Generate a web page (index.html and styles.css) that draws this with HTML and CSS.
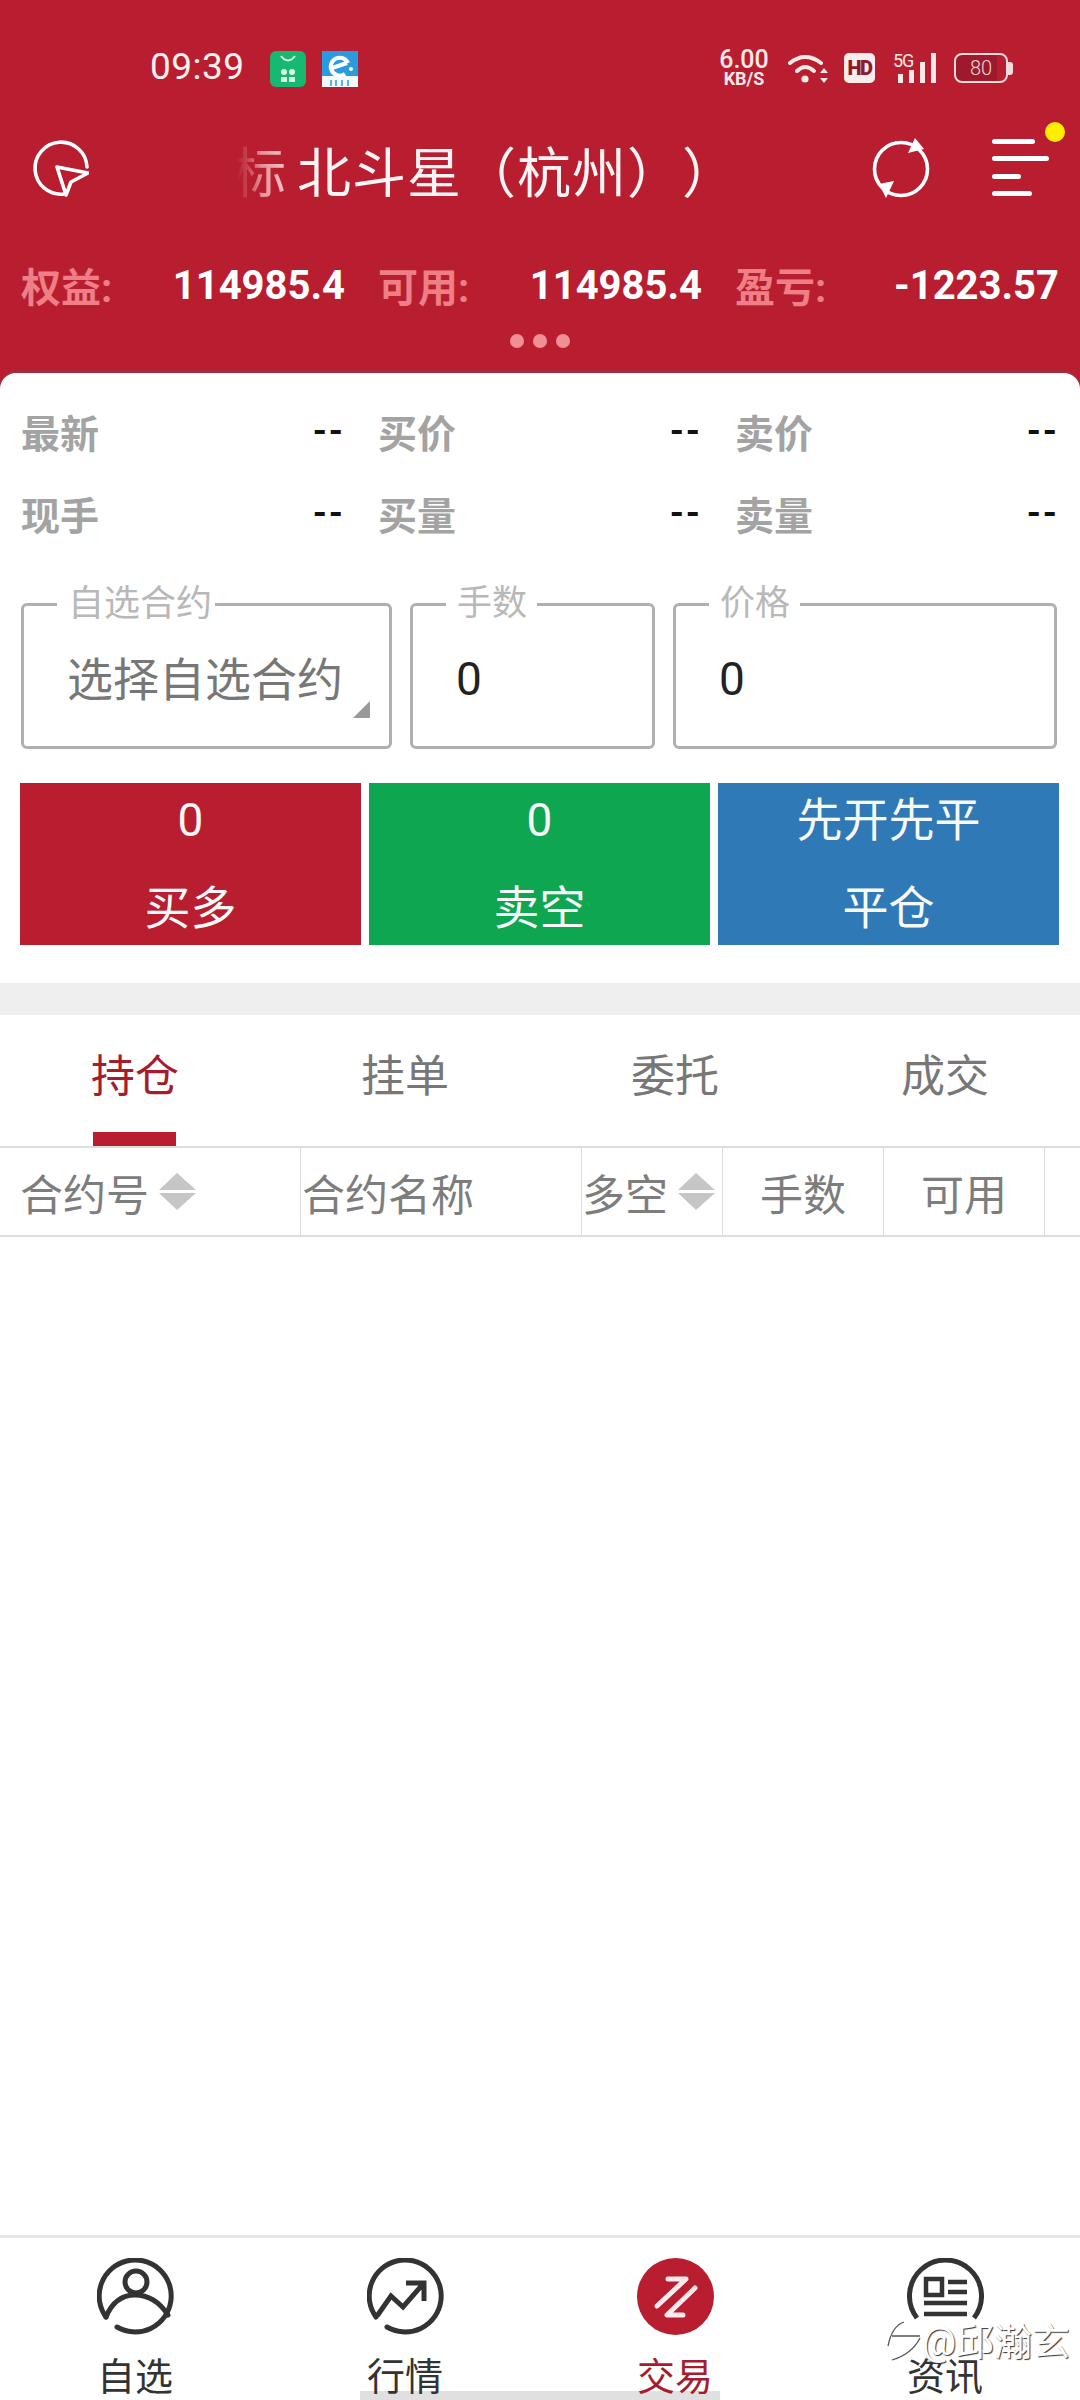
FILE: index.html
```html
<!DOCTYPE html>
<html lang="en">
<head>
    <meta charset="UTF-8">
    <meta name="viewport" content="width=device-width, initial-scale=1.0">
    <title>交易</title>
    <link rel="stylesheet" href="styles.css">
</head>
<body>
<div class="app">
    <div class="top">
        <div class="status">
            <span class="time">09:39</span>
            <svg class="app-icon" viewBox="0 0 36 36"><rect width="36" height="36" rx="6" fill="#16b96f"/><path d="M11 5q7 9 14 0" fill="none" stroke="#d8f5e6" stroke-width="2"/><g fill="#d8f5e6"><circle cx="14" cy="21" r="3"/><circle cx="22" cy="21" r="3"/><rect x="11" y="26" width="6" height="5"/><rect x="19" y="26" width="6" height="5"/></g></svg>
            <svg class="app-icon" viewBox="0 0 36 36"><rect width="36" height="36" fill="#2a9be0"/><rect y="25" width="36" height="11" fill="#f2f9fd"/><path d="M26 12a9 9 0 1 0-3 11M10 17l15-5" fill="none" stroke="#fff" stroke-width="4"/><circle cx="29" cy="18" r="2" fill="#fff"/><path d="M9 29v6M14 29v6M20 29v6M26 29v6" stroke="#2a9be0" stroke-width="1.5"/></svg>
            <span class="status-gap"></span>
            <span class="speed"><b>6.00</b><i>KB/S</i></span>
            <svg class="wifi" viewBox="0 0 41 28"><g fill="none" stroke="#f9e8e8" stroke-width="4" stroke-linecap="round"><path d="M2 8Q17-4 33 8"/><path d="M9 16Q17 8 26 16"/></g><circle cx="17" cy="24" r="3.6" fill="#f9e8e8"/><path d="M36 13l4 5h-8zM36 28l4-5h-8z" fill="#f9e8e8"/></svg>
            <span class="hd">HD</span>
            <span class="signal"><em>5G</em><i class="b1"></i><i class="b2"></i><i class="b3"></i><i class="b4"></i></span>
            <span class="battery"><span class="battery-body">80</span><i></i></span>
        </div>

        <div class="title-row">
            <svg class="ico-loc" viewBox="0 0 57 59"><path d="M32 55A26 26 0 1 1 55 28" fill="none" stroke="#fff" stroke-width="3.6" stroke-linecap="round"/><path d="M25 28L56 34L39 43L34 56Z" fill="#b81e2f" stroke="#fff" stroke-width="3.6" stroke-linejoin="round"/></svg>
            <div class="title"><span class="title-fade">标</span>北斗星（杭州））</div>
            <svg class="ico-refresh" viewBox="0 0 58 60"><circle cx="29" cy="31" r="26.5" fill="none" stroke="#fff" stroke-width="3.6"/><path d="M43 0L52 11L36 15ZM7 46L22 43L14 60Z" fill="#fff"/></svg>
            <div class="ico-menu">
                <i class="m1"></i><i class="m2"></i><i class="m3"></i><i class="m4"></i>
                <span class="dot-new"></span>
            </div>
        </div>

        <div class="account">
            <div class="acc"><span>权益:</span><b>114985.4</b></div>
            <div class="acc"><span>可用:</span><b>114985.4</b></div>
            <div class="acc"><span>盈亏:</span><b>-1223.57</b></div>
        </div>
        <div class="dots"><i></i><i></i><i></i></div>
    </div>

    <div class="panel">
        <div class="quote">
            <div class="q"><span>最新</span><b>--</b></div>
            <div class="q"><span>买价</span><b>--</b></div>
            <div class="q"><span>卖价</span><b>--</b></div>
            <div class="q"><span>现手</span><b>--</b></div>
            <div class="q"><span>买量</span><b>--</b></div>
            <div class="q"><span>卖量</span><b>--</b></div>
        </div>

        <div class="fields">
            <fieldset class="field f-contract">
                <legend>自选合约</legend>
                <span class="select-text">选择自选合约</span>
                <i class="corner"></i>
            </fieldset>
            <fieldset class="field f-lots">
                <legend>手数</legend>
                <span class="num">0</span>
            </fieldset>
            <fieldset class="field f-price">
                <legend>价格</legend>
                <span class="num">0</span>
            </fieldset>
        </div>

        <div class="actions">
            <div class="act red"><span>0</span><span>买多</span></div>
            <div class="act green"><span>0</span><span>卖空</span></div>
            <div class="act blue"><span>先开先平</span><span>平仓</span></div>
        </div>
    </div>

    <div class="sep"></div>

    <div class="tabs">
        <div class="tab on">持仓<i></i></div>
        <div class="tab">挂单</div>
        <div class="tab">委托</div>
        <div class="tab">成交</div>
    </div>

    <div class="thead">
        <div class="th c1">合约号<span class="sort"></span></div>
        <div class="th c2">合约名称</div>
        <div class="th c3">多空<span class="sort"></span></div>
        <div class="th c4">手数</div>
        <div class="th c5">可用</div>
        <div class="th c6"></div>
    </div>

    <div class="list"></div>

    <div class="nav">
        <div class="nav-item">
            <svg viewBox="0 0 77 77"><path d="M9 59A36 36 0 1 1 20 69" fill="none" stroke="#333" stroke-width="5" stroke-linecap="round"/><circle cx="39" cy="24" r="11" fill="none" stroke="#333" stroke-width="5"/><path d="M9 59Q18 37 38 37T71 57" fill="none" stroke="#333" stroke-width="5" stroke-linecap="round"/></svg>
            <span>自选</span>
        </div>
        <div class="nav-item">
            <svg viewBox="0 0 77 77"><path d="M9 59A36 36 0 1 1 20 69" fill="none" stroke="#333" stroke-width="5" stroke-linecap="round"/><path d="M10 58L24 38L36 49L56 26M39 25H57V43" fill="none" stroke="#333" stroke-width="5"/></svg>
            <span>行情</span>
        </div>
        <div class="nav-item on">
            <svg viewBox="0 0 77 77"><circle cx="38.5" cy="38.5" r="38.5" fill="#b81e2f"/><path d="M31 21H49L20 48M58 30L30 57H46" fill="none" stroke="#fbe9eb" stroke-width="5" stroke-linecap="round" stroke-linejoin="round"/></svg>
            <span>交易</span>
        </div>
        <div class="nav-item">
            <svg viewBox="0 0 77 77"><path d="M10 60A36 36 0 1 1 67 60" fill="none" stroke="#333" stroke-width="5"/><path d="M19 21H35V37H19ZM41 24H60M41 34H60M17 45H60M17 56H60" fill="none" stroke="#333" stroke-width="4.5"/></svg>
            <span>资讯</span>
        </div>
        <div class="home-bar"></div>
        <div class="watermark">
            <svg viewBox="0 0 36 44"><path d="M2 26Q6 6 18 2M6 16H34M6 40Q26 34 34 18" fill="none" stroke="#555" stroke-width="1.3"/></svg>
            <span>@邱瀚玄</span>
        </div>
    </div>
</div>
</body>
</html>
```

FILE: styles.css
```css
* {
    box-sizing: border-box;
}
body {
    margin: 0;
    background: #fff;
    font-family: "Roboto", "Noto Sans CJK SC", sans-serif;
}
i, em {
    font-style: normal;
}
.app {
    width: 1080px;
    height: 2400px;
    display: flex;
    flex-direction: column;
    overflow: hidden;
}

/* red header */
.top {
    height: 393px;
    flex: none;
    background: #b81e2f;
    color: #fff;
}
.status {
    height: 138px;
    padding: 51px 67px 0 150px;
    display: flex;
    align-items: flex-start;
}
.time {
    width: 120px;
    margin-top: -2px;
    font-size: 37px;
    line-height: 36px;
    letter-spacing: .5px;
    color: #fbeeee;
}
.app-icon {
    width: 36px;
    height: 36px;
    margin-right: 16px;
}
.status-gap {
    flex: 1;
}
.speed {
    width: 50px;
    display: flex;
    flex-direction: column;
    align-items: center;
    color: #f9e8e8;
    margin-top: -1px;
}
.speed b {
    font-size: 25px;
    line-height: 20px;
    font-weight: 500;
}
.speed i {
    font-size: 18px;
    line-height: 18px;
    font-weight: 700;
}
.wifi {
    width: 41px;
    height: 28px;
    margin: 4px 0 0 19px;
}
.hd {
    width: 31px;
    height: 30px;
    margin: 2px 0 0 15px;
    background: #f9ecec;
    border-radius: 5px;
    color: #8f1a2a;
    font-size: 20px;
    font-weight: 900;
    line-height: 30px;
    text-align: center;
    letter-spacing: -1.5px;
}
.signal {
    position: relative;
    width: 43px;
    height: 30px;
    margin: 2px 0 0 18px;
}
.signal em {
    position: absolute;
    left: 0;
    top: 0;
    font-size: 18px;
    line-height: 15px;
    letter-spacing: -1px;
    color: #f9e8e8;
}
.signal i {
    position: absolute;
    bottom: 0;
    width: 5px;
    background: #f9e8e8;
}
.signal .b1 { left: 5px; height: 9px; }
.signal .b2 { left: 16px; height: 13px; }
.signal .b3 { left: 27px; height: 21px; }
.signal .b4 { left: 38px; height: 30px; }
.battery {
    display: flex;
    align-items: center;
    margin: 2px 0 0 18px;
}
.battery-body {
    width: 54px;
    height: 30px;
    border: 2px solid #f5dcdc;
    border-radius: 8px;
    background: linear-gradient(to right, #9c1a2b 82%, transparent 82%);
    color: #f3d5d8;
    font-size: 20px;
    font-weight: 300;
    line-height: 26px;
    text-align: center;
}
.battery i {
    width: 5px;
    height: 13px;
    background: #f5dcdc;
    border-radius: 0 3px 3px 0;
}
.title-row {
    height: 60px;
    padding: 0 31px 0 32px;
    display: flex;
    align-items: center;
}
.ico-loc {
    width: 57px;
    height: 59px;
    flex: none;
}
.title {
    flex: 1;
    margin: 13px 0 0 143px;
    font-size: 54px;
    line-height: 60px;
    letter-spacing: 1px;
    white-space: nowrap;
    color: #fdf5f5;
    text-spacing-trim: space-all;
}
.title-fade {
    display: inline-block;
    width: 54px;
    margin-right: 11px;
    color: #f6c4c6;
    -webkit-mask-image: linear-gradient(to right, transparent 8%, rgba(0,0,0,.25) 30%, rgba(0,0,0,.7) 55%, #000 100%);
    mask-image: linear-gradient(to right, transparent 8%, rgba(0,0,0,.25) 30%, rgba(0,0,0,.7) 55%, #000 100%);
}
.ico-refresh {
    width: 58px;
    height: 60px;
    flex: none;
    margin-right: 62px;
}
.ico-menu {
    position: relative;
    width: 57px;
    height: 58px;
    flex: none;
}
.ico-menu i {
    position: absolute;
    left: 0;
    height: 5px;
    border-radius: 3px;
    background: #fff;
}
.ico-menu .m1 { top: 0; width: 43px; }
.ico-menu .m2 { top: 17px; width: 57px; }
.ico-menu .m3 { top: 35px; width: 29px; }
.ico-menu .m4 { top: 52px; width: 40px; }
.dot-new {
    position: absolute;
    left: 53px;
    top: -17px;
    width: 20px;
    height: 20px;
    border-radius: 50%;
    background: #ffee00;
}
.account {
    height: 60px;
    margin-top: 57px;
    padding: 0 21px;
    display: grid;
    grid-template-columns: repeat(3, 324px);
    column-gap: 33px;
}
.acc {
    display: flex;
    justify-content: space-between;
    align-items: center;
}
.acc span {
    font-size: 40px;
    font-weight: 700;
    color: #ee7f86;
}
.acc b {
    font-size: 40px;
    font-weight: 700;
}
.dots {
    display: flex;
    justify-content: center;
    gap: 9px;
    margin-top: 19px;
}
.dots i {
    width: 14px;
    height: 14px;
    border-radius: 50%;
    background: #f28f96;
}

/* white panel */
.panel {
    position: relative;
    margin-top: -20px;
    height: 610px;
    flex: none;
    padding: 17px 21px 0;
    background: #fff;
    border-radius: 16px 16px 0 0;
    box-shadow: 0 -3px 0 #a92a3b;
}
.quote {
    display: grid;
    grid-template-columns: repeat(3, 324px);
    column-gap: 33px;
    grid-auto-rows: 82px;
}
.q {
    display: flex;
    justify-content: space-between;
    align-items: center;
}
.q span {
    font-size: 39px;
    font-weight: 700;
    color: #a3a3a3;
}
.q b {
    font-size: 36px;
    font-weight: 700;
    letter-spacing: 2px;
    color: #111;
}
.fields {
    display: flex;
    gap: 18px;
    margin-top: 30px;
}
.field {
    position: relative;
    margin: 0;
    height: 165px;
    border: 3px solid #b0b0b0;
    border-radius: 6px;
    padding: 0;
    min-width: 0;
}
.field legend {
    margin-left: 33px;
    padding: 0 10px 0 11px;
    font-size: 35px;
    line-height: 40px;
    color: #b8b8b8;
}
.f-contract {
    width: 371px;
}
.f-contract legend {
    padding: 0 3px 0 11px;
    font-size: 36px;
}
.f-lots {
    width: 245px;
}
.f-price {
    width: 384px;
}
.select-text {
    display: block;
    margin: 26px 0 0 43px;
    font-size: 46px;
    line-height: 60px;
    color: #777;
}
.num {
    display: block;
    margin: 25px 0 0 43px;
    font-size: 46px;
    line-height: 60px;
    color: #222;
}
.corner {
    position: absolute;
    right: 19px;
    bottom: 28px;
    width: 0;
    height: 0;
    border-left: 17px solid transparent;
    border-bottom: 17px solid #999;
}
.actions {
    display: flex;
    gap: 8px;
    margin: 34px 0 0 -1px;
}
.act {
    width: 341px;
    height: 162px;
    display: flex;
    flex-direction: column;
    align-items: center;
    color: #f8f8f8;
    font-size: 46px;
}
.act span {
    line-height: 75px;
}
.act span + span {
    margin-top: 14px;
    line-height: 73px;
}
.red { background: #b81e2f; }
.green { background: #0ea650; }
.blue { background: #2f79b6; }

.sep {
    height: 32px;
    background: #efefef;
    flex: none;
}

/* tabs */
.tabs {
    height: 131px;
    display: grid;
    grid-template-columns: repeat(4, 270px);
    flex: none;
}
.tab {
    position: relative;
    text-align: center;
    font-size: 44px;
    line-height: 124px;
    color: #777;
}
.tab.on {
    color: #a51c2d;
}
.tab i {
    position: absolute;
    left: 93px;
    bottom: 0;
    width: 83px;
    height: 14px;
    background: #b81e2f;
}

/* table head */
.thead {
    height: 91px;
    display: flex;
    flex: none;
    border-top: 2px solid #ddd;
    border-bottom: 2px solid #ddd;
}
.th {
    display: flex;
    align-items: center;
    justify-content: center;
    font-size: 43px;
    color: #7d7d7d;
    border-right: 1px solid #ddd;
}
.c1 { width: 301px; justify-content: flex-start; padding-left: 20px; }
.c2 { width: 281px; justify-content: flex-start; padding-left: 1px; }
.c3 { width: 141px; justify-content: flex-start; }
.c4 { width: 161px; }
.c5 { width: 161px; }
.c6 { flex: 1; border-right: 0; }
.sort {
    position: relative;
    width: 37px;
    height: 37px;
    margin-left: 10px;
}
.sort::before, .sort::after {
    content: "";
    position: absolute;
    left: 0;
    border-left: 18px solid transparent;
    border-right: 19px solid transparent;
}
.sort::before {
    top: 0;
    border-bottom: 17px solid #c6c6c6;
}
.sort::after {
    bottom: 0;
    border-top: 17px solid #c6c6c6;
}

.list {
    flex: 1;
}

/* bottom nav */
.nav {
    position: relative;
    height: 165px;
    flex: none;
    border-top: 3px solid #e6e6e6;
    display: grid;
    grid-template-columns: repeat(4, 270px);
    overflow: hidden;
}
.nav-item {
    display: flex;
    flex-direction: column;
    align-items: center;
    padding-top: 20px;
    font-size: 38px;
    line-height: 40px;
    color: #333;
}
.nav-item svg {
    width: 77px;
    height: 77px;
    margin-bottom: 22px;
}
.nav-item.on {
    color: #a51c2d;
}
.home-bar {
    position: absolute;
    left: 360px;
    bottom: 0;
    width: 360px;
    height: 9px;
    background: #e0e0e0;
    z-index: -1;
}
.watermark {
    position: absolute;
    left: 886px;
    top: 82px;
    display: flex;
    align-items: center;
    font-size: 38px;
    line-height: 32px;
    color: #fff;
    text-shadow: 1px 1px 1px #333;
    white-space: nowrap;
}
.watermark svg {
    width: 36px;
    height: 44px;
}
```
